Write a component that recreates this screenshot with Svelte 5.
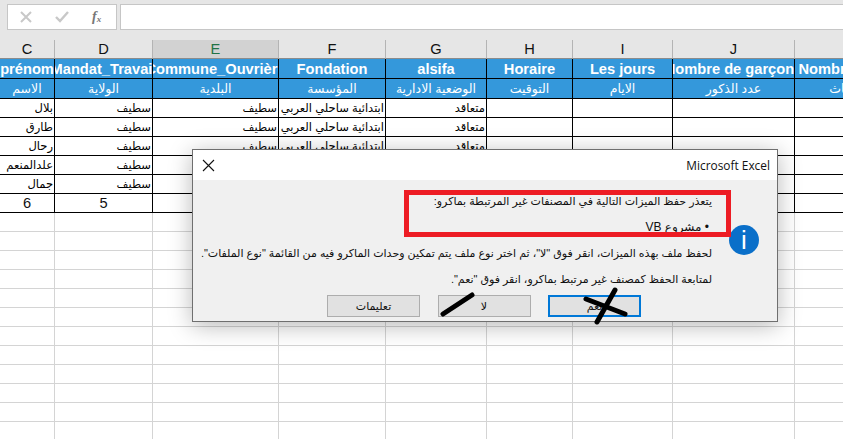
<script>
  const letters = ['C', 'D', 'E', 'F', 'G', 'H', 'I', 'J', 'K'];
  const headFr = ['prénom', 'Mandat_Travail', 'Commune_Ouvrière', 'Fondation', 'alsifa', 'Horaire', 'Les jours', 'Nombre de garçons', 'Nombre de filles'];
  const headAr = ['الاسم', 'الولاية', 'البلدية', 'المؤسسة', 'الوضعية الادارية', 'التوقيت', 'الايام', 'عدد الذكور', 'عدد الإناث'];
  const names = ['بلال', 'طارق', 'رحال', 'علدالمنعم', 'جمال'];
  const blank = Array.from({ length: 12 });
</script>

<div class="sheet">
  <div class="formula">
    <div class="fbox">
      <svg width="12" height="12" viewBox="0 0 12 12"><path d="M1 1l10 10M11 1L1 11" stroke="#c8c8c8" stroke-width="2" fill="none" /></svg>
      <svg width="14" height="12" viewBox="0 0 14 12"><path d="M1 6l4 4 8-9" stroke="#c8c8c8" stroke-width="2.4" fill="none" /></svg>
      <span class="fx">f<sub>x</sub></span>
    </div>
    <div class="finput"></div>
  </div>

  <div class="row letters">
    {#each letters as l}
      <div class="cell" class:sel={l === 'E'}>{l}</div>
    {/each}
  </div>

  <div class="row blue fr">
    {#each headFr as h}
      <div class="cell"><span>{h}</span></div>
    {/each}
  </div>
  <div class="row blue ar">
    {#each headAr as h}
      <div class="cell"><span dir="rtl">{h}</span></div>
    {/each}
  </div>

  {#each names as n}
    <div class="row data">
      <div class="cell" dir="rtl">{n}</div>
      <div class="cell" dir="rtl">سطيف</div>
      <div class="cell" dir="rtl">سطيف</div>
      <div class="cell" dir="rtl">ابتدائية ساحلي العربي</div>
      <div class="cell" dir="rtl">متعاقد</div>
      <div class="cell"></div>
      <div class="cell"></div>
      <div class="cell"></div>
      <div class="cell"></div>
    </div>
  {/each}

  <div class="row data total">
    <div class="cell">6</div>
    <div class="cell">5</div>
    <div class="cell"></div>
    <div class="cell"></div>
    <div class="cell"></div>
    <div class="cell"></div>
    <div class="cell"></div>
    <div class="cell"></div>
    <div class="cell"></div>
  </div>

  {#each blank as _}
    <div class="row empty">
      {#each letters as l}
        <div class="cell"></div>
      {/each}
    </div>
  {/each}

  <div class="dialog">
    <div class="titlebar">
      <svg width="13" height="13" viewBox="0 0 13 13"><path d="M1 1l11 11M12 1L1 12" stroke="#111" stroke-width="1.1" fill="none" /></svg>
      <span>Microsoft Excel</span>
    </div>
    <div class="body">
      <div class="message">
        <div class="msg" dir="rtl">يتعذر حفظ الميزات التالية في المصنفات غير المرتبطة بماكرو:</div>
        <div class="msg bullet" dir="rtl">• مشروع VB</div>
        <div class="msg" dir="rtl">لحفظ ملف بهذه الميزات، انقر فوق "لا"، ثم اختر نوع ملف يتم تمكين وحدات الماكرو فيه من القائمة "نوع الملفات".</div>
        <div class="msg" dir="rtl">لمتابعة الحفظ كمصنف غير مرتبط بماكرو، انقر فوق "نعم".</div>
      </div>
      <div class="info">i</div>
    </div>
    <div class="buttons">
      <button>تعليمات</button>
      <button>لا</button>
      <button class="primary">نعم</button>
    </div>
  </div>

  <div class="redbox"></div>
  <svg class="ink" width="843" height="439" viewBox="0 0 843 439">
    <path d="M443 314L472 295M586 299L625 314M615 290L597 322" stroke="#000" stroke-width="5" stroke-linecap="round" fill="none" />
  </svg>
</div>

<style>
  :global(body) { margin: 0; }
  .sheet {
    position: relative;
    width: 843px;
    height: 439px;
    overflow: hidden;
    background: #fff;
    font-family: "Liberation Sans", "DejaVu Sans", sans-serif;
  }
  .formula {
    display: flex;
    gap: 3px;
    height: 40px;
    padding: 4px 0 0 7px;
    box-sizing: border-box;
    background: #e6e6e6;
  }
  .fbox, .finput {
    height: 26px;
    box-sizing: border-box;
    background: #fff;
    border: 1px solid #c6c6c6;
  }
  .fbox {
    display: flex;
    align-items: center;
    gap: 23px;
    width: 110px;
    padding-left: 12px;
  }
  .fx {
    font: italic 700 14px "Liberation Serif", serif;
    color: #777;
    line-height: 1;
  }
  .fx sub { font-size: 9px; vertical-align: -1px; line-height: 0; }
  .finput { flex: 1; border-right: 0; }

  .row {
    display: grid;
    grid-template-columns: 55px 98px 126px 107px 101px 86px 100px 122px 122px;
    height: 19px;
    box-sizing: border-box;
  }
  .cell {
    box-sizing: border-box;
    border-right: 1px solid #000;
    border-bottom: 1px solid #000;
    overflow: hidden;
    white-space: nowrap;
    min-width: 0;
  }

  .letters { background: #e6e6e6; }
  .letters .cell {
    text-align: center;
    font-size: 14.67px;
    line-height: 19px;
    color: #111;
    border-right: 1px solid #b4b4b4;
    border-bottom: 1px solid #8c8c8c;
  }
  .letters .sel { background: #d2d2d2; color: #217346; }

  .blue { background: #3498db; color: #fff; }
  .blue .cell {
    display: flex;
    justify-content: center;
    align-items: center;
  }
  .blue .cell span { flex: none; }
  .fr { height: 20px; }
  .fr .cell { font-weight: 700; font-size: 14.67px; }
  .ar { height: 20px; }
  .ar .cell { font-size: 12.5px; }

  .data .cell {
    font-size: 11.5px;
    line-height: 18px;
    color: #000;
    padding: 0 1px;
  }
  .total .cell {
    text-align: center;
    font-size: 14.67px;
    color: #111;
  }
  .empty .cell {
    border-right: 1px solid #d4d4d4;
    border-bottom: 1px solid #d4d4d4;
  }

  .dialog {
    position: absolute;
    left: 192px;
    top: 149px;
    width: 586px;
    height: 173px;
    box-sizing: border-box;
    border: 1px solid #6f6f6f;
    background: #f0f0f0;
    box-shadow: 0 4px 22px rgba(0, 0, 0, 0.28);
    display: flex;
    flex-direction: column;
  }
  .titlebar {
    display: flex;
    align-items: center;
    justify-content: space-between;
    height: 30px;
    flex: none;
    padding: 0 7px 0 9px;
    background: #fff;
    font: 11.9px "Open Sans", sans-serif;
    color: #111;
  }
  .body {
    display: flex;
    align-items: center;
    gap: 17px;
    padding: 8px 18px 0 0;
    flex: none;
  }
  .message { flex: 1; min-width: 0; }
  .msg {
    height: 26px;
    line-height: 26px;
    font-size: 11px;
    color: #111;
    white-space: nowrap;
  }
  .bullet { font-size: 12px; margin-right: 3px; }
  .info {
    flex: none;
    width: 30px;
    height: 30px;
    border-radius: 50%;
    background: #0a6fc9;
    color: #fff;
    text-align: center;
    font: 26px/30px "Liberation Sans", sans-serif;
  }
  .buttons {
    position: absolute;
    left: 134px;
    top: 145px;
    display: flex;
    gap: 17.5px;
  }
  button {
    width: 93px;
    height: 22px;
    box-sizing: border-box;
    padding: 0;
    border: 1px solid #adadad;
    background: #e1e1e1;
    color: #111;
    font: 11px "Liberation Sans", "DejaVu Sans", sans-serif;
  }
  .primary { border: 2px solid #0078d7; }

  .redbox {
    position: absolute;
    left: 404px;
    top: 190px;
    width: 327px;
    height: 47px;
    box-sizing: border-box;
    border: 5px solid #ed1c24;
  }
  .ink { position: absolute; left: 0; top: 0; pointer-events: none; }
</style>
